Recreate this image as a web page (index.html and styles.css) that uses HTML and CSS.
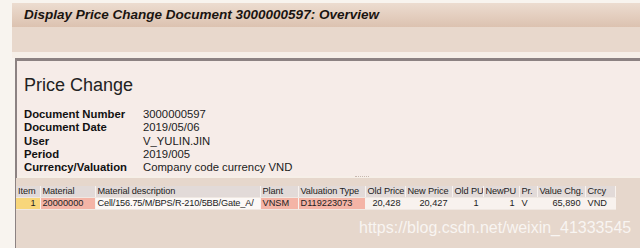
FILE: index.html
```html
<!DOCTYPE html>
<html lang="en">
<head>
  <meta charset="UTF-8">
  <title>Display Price Change Document</title>
  <link rel="stylesheet" href="styles.css">
</head>
<body>
  <div class="screen">
    <header class="title-bar">
      <h1>Display Price Change Document 3000000597: Overview</h1>
    </header>
    <div class="toolbar"></div>

    <!-- header data -->
    <section class="panel">
      <h2>Price Change</h2>
      <dl class="fields">
        <dt>Document Number</dt><dd>3000000597</dd>
        <dt>Document Date</dt><dd>2019/05/06</dd>
        <dt>User</dt><dd>V_YULIN.JIN</dd>
        <dt>Period</dt><dd>2019/005</dd>
        <dt>Currency/Valuation</dt><dd>Company code currency VND</dd>
      </dl>
    </section>

    <div class="splitter"><span class="grip"></span></div>

    <!-- items -->
    <section class="items">
      <table class="grid">
        <colgroup>
          <col style="width: 24px">
          <col style="width: 55px">
          <col style="width: 165px">
          <col style="width: 38px">
          <col style="width: 67px">
          <col style="width: 40px">
          <col style="width: 47px">
          <col style="width: 31px">
          <col style="width: 36px">
          <col style="width: 18px">
          <col style="width: 48px">
          <col style="width: 30px">
        </colgroup>
        <thead>
          <tr>
            <th>Item</th>
            <th>Material</th>
            <th>Material description</th>
            <th>Plant</th>
            <th>Valuation Type</th>
            <th>Old Price</th>
            <th>New Price</th>
            <th>Old PU</th>
            <th>NewPU</th>
            <th>Pr.</th>
            <th>Value Chg.</th>
            <th>Crcy</th>
          </tr>
        </thead>
        <tbody>
          <tr>
            <td class="key num">1</td>
            <td class="pink">20000000</td>
            <td class="white">Cell/156.75/M/BPS/R-210/5BB/Gate_A/</td>
            <td class="pink">VNSM</td>
            <td class="pink">D119223073</td>
            <td class="num">20,428</td>
            <td class="num">20,427</td>
            <td class="num">1</td>
            <td class="num">1</td>
            <td>V</td>
            <td class="num">65,890</td>
            <td>VND</td>
          </tr>
        </tbody>
      </table>
      <div class="watermark">https://blog.csdn.net/weixin_41333545</div>
    </section>
  </div>
</body>
</html>
```

FILE: styles.css
```css
body {
  margin: 0;
  padding: 0;
  background-color: #f8f4ef;
  font-family: 'Liberation Sans', Arial, sans-serif;
  color: #111;
  overflow: hidden;
}
.screen {
  margin-left: 12px;
  padding-top: 3px;
}
.title-bar {
  height: 24px;
  background: linear-gradient(#ecdcd0, #dcc2b0);
  padding-left: 12px;
}
.title-bar h1 {
  margin: 0;
  font-size: 13.5px;
  line-height: 23px;
  font-weight: bold;
  font-style: italic;
  color: #1a1410;
}
.toolbar {
  height: 25px;
  background-color: #e8d8cc;
  border-bottom: 6px solid #f6efe8;
}
.panel {
  margin-left: 3px;
  border-top: 3px solid #8c8282;
  border-left: 2px solid #8c8282;
  background-color: #f6ece8;
  padding: 13px 0 0 7px;
  height: 102px;
}
.panel h2 {
  margin: 0 0 12px;
  font-weight: normal;
  font-size: 18px;
  line-height: 22px;
  color: #222;
}
.fields {
  display: grid;
  grid-template-columns: 119px auto;
  margin: 0;
  font-size: 11.3px;
  line-height: 13.3px;
}
.fields dt {
  font-weight: bold;
}
.fields dd {
  margin: 0;
  color: #222;
}
.splitter {
  height: 2px;
  margin-left: 3px;
  border-left: 2px solid #8c8282;
  background-color: #f6efe8;
}
.grip {
  display: block;
  width: 14px;
  margin-left: 338px;
  border-top: 1px dotted #c8b8b0;
}
.items {
  position: relative;
  margin-left: 3px;
  border-left: 1px solid #8c8282;
  background-color: #e6d7cc;
  height: 70px;
  padding-top: 8px;
}
.grid {
  table-layout: fixed;
  width: 599px;
  border-collapse: collapse;
  font-size: 9.2px;
  line-height: 11px;
  color: #222;
}
.grid th,
.grid td {
  padding: 0 1px 0 2px;
  white-space: nowrap;
  overflow: hidden;
  text-align: left;
  font-weight: normal;
  border-right: 1px solid #f8f2ee;
  border-bottom: 1px solid #f0e8e2;
}
.grid th {
  background-color: #e2dad8;
  letter-spacing: -0.1px;
}
.grid td {
  background-color: #f8f2ee;
}
.grid td.num {
  text-align: right;
  padding-right: 4px;
}
.grid td.key {
  background-color: #f8d67a;
}
.grid td.pink {
  background-color: #f4b4a6;
}
.grid td.white {
  background-color: #fcf8f6;
  letter-spacing: -0.15px;
}
.watermark {
  position: absolute;
  left: 343px;
  top: 40px;
  font-size: 16px;
  line-height: 20px;
  color: rgba(255, 255, 255, 0.75);
}
```
